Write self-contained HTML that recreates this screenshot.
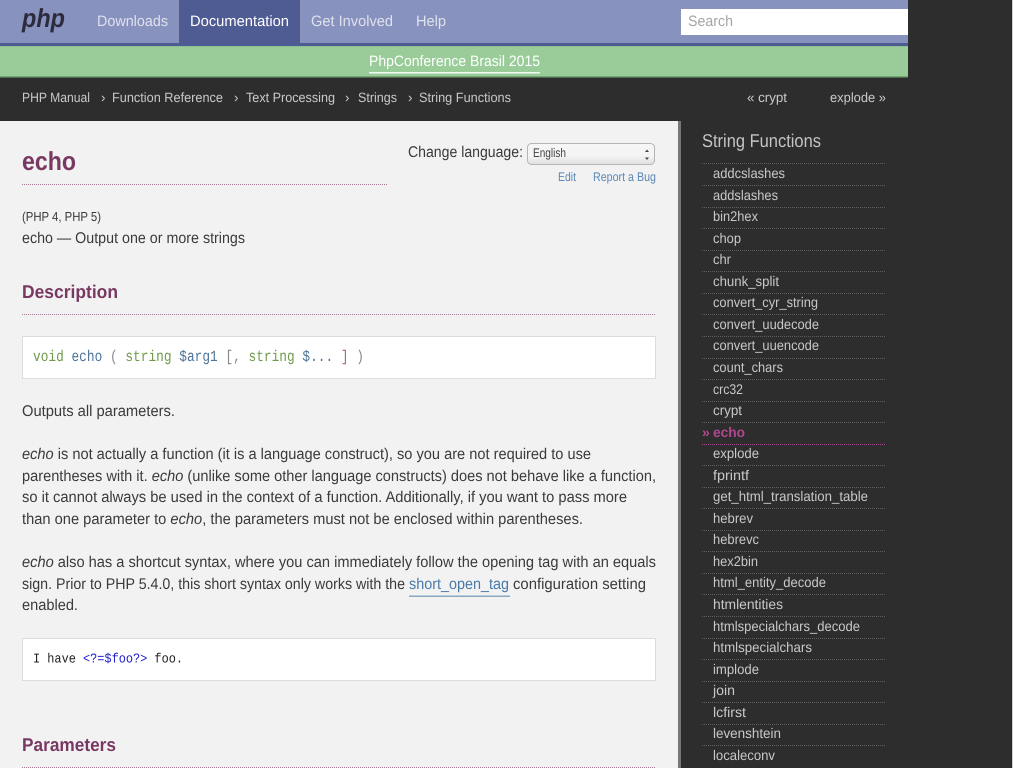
<!DOCTYPE html>
<html><head><meta charset="utf-8"><title>PHP: echo - Manual</title>
<style>
html,body{margin:0;padding:0;background:#fff}
body{width:1024px;height:768px;overflow:hidden;position:relative;font-family:"Liberation Sans",sans-serif}
svg{position:absolute;left:0;top:0}
text{font-family:"Liberation Sans",sans-serif;font-size:14px;white-space:pre;text-rendering:geometricPrecision}
.n{fill:#e2e4ef;font-size:15px}
.b{fill:#c9c9c9;font-size:13.5px}
.s{fill:#c8c8c8;font-size:14px}
.p{fill:#3a3a3a;font-size:15.500px}
.h{fill:#793862;font-weight:bold}
</style></head><body>
<svg width="1024" height="768" viewBox="0 0 1024 768">
<rect x="0" y="0" width="1013" height="768" fill="#2d2d2d"/>
<rect x="1012" y="0" width="1" height="768" fill="#cfcfcf"/>
<rect width="908" height="43" fill="#8892bf"/>
<rect y="43" width="908" height="3" fill="#4f5b93"/>
<rect x="179" width="121" height="43" fill="#4f5b93"/>
<rect y="47" width="908" height="29" fill="#99cc99"/>
<rect y="46" width="908" height="1" fill="#8fc08f"/>
<rect y="76" width="908" height="1.500" fill="#73a673"/>
<rect x="681" y="9" width="227" height="26" fill="#fff"/>
<text x="22" y="27" style="font-size:26px;font-weight:bold;font-style:italic;fill:#2b2b3d" textLength="43" lengthAdjust="spacingAndGlyphs">php</text>
<text class="n" x="97" y="26" textLength="71" lengthAdjust="spacingAndGlyphs" style="fill:#dfe1ec">Downloads</text>
<text class="n" x="190" y="26" textLength="99" lengthAdjust="spacingAndGlyphs" style="fill:#fff">Documentation</text>
<text class="n" x="311" y="26" textLength="82" lengthAdjust="spacingAndGlyphs" style="fill:#dfe1ec">Get Involved</text>
<text class="n" x="416" y="26" textLength="30" lengthAdjust="spacingAndGlyphs" style="fill:#dfe1ec">Help</text>
<text x="688" y="26" textLength="45" lengthAdjust="spacingAndGlyphs" style="font-size:15px;fill:#a5a5a5">Search</text>
<text x="369" y="66" textLength="171" lengthAdjust="spacingAndGlyphs" style="font-size:15px;fill:#fff">PhpConference Brasil 2015</text>
<rect x="369" y="72" width="171" height="1.500" fill="#f2f8f2"/>

<text class="b" x="22" y="102" textLength="68" lengthAdjust="spacingAndGlyphs">PHP Manual</text>
<text class="b" x="101" y="102">›</text>
<text class="b" x="112" y="102" textLength="111" lengthAdjust="spacingAndGlyphs">Function Reference</text>
<text class="b" x="234" y="102">›</text>
<text class="b" x="246" y="102" textLength="89" lengthAdjust="spacingAndGlyphs">Text Processing</text>
<text class="b" x="345" y="102">›</text>
<text class="b" x="358" y="102" textLength="39" lengthAdjust="spacingAndGlyphs">Strings</text>
<text class="b" x="408" y="102">›</text>
<text class="b" x="419" y="102" textLength="92" lengthAdjust="spacingAndGlyphs">String Functions</text>
<text class="b" x="747" y="102" textLength="40" lengthAdjust="spacingAndGlyphs">« crypt</text>
<text class="b" x="830" y="102" textLength="56" lengthAdjust="spacingAndGlyphs">explode »</text>

<rect x="0" y="121" width="678" height="647" fill="#f2f2f2"/>
<rect x="678" y="121" width="3" height="647" fill="#777"/>

<text x="22" y="170" textLength="54" lengthAdjust="spacingAndGlyphs" class="h" style="font-size:26px">echo</text>
<line x1="22" x2="387" y1="184.500" y2="184.500" stroke="#793862" stroke-dasharray="1 1" opacity=".65"/>
<text x="408" y="157" textLength="115" lengthAdjust="spacingAndGlyphs" style="font-size:15.500px;fill:#3a3a3a">Change language:</text>
<defs><linearGradient id="g" x1="0" y1="0" x2="0" y2="1"><stop offset="0" stop-color="#f6f6f6"/><stop offset=".6" stop-color="#f4f4f4"/><stop offset="1" stop-color="#dedede"/></linearGradient></defs>
<rect x="527.500" y="143.500" width="127" height="21" rx="4" fill="url(#g)" stroke="#b5b5b5"/>
<text x="533" y="157" textLength="33" lengthAdjust="spacingAndGlyphs" style="font-size:12.500px;fill:#444">English</text>
<path d="M645 152l2-2.500 2 2.500zM645 157.500l2 2.500 2-2.500z" fill="#444"/>
<text x="558" y="181" textLength="18" lengthAdjust="spacingAndGlyphs" style="font-size:12.500px;fill:#5b88b5">Edit</text>
<text x="593" y="181" textLength="63" lengthAdjust="spacingAndGlyphs" style="font-size:12.500px;fill:#5b88b5">Report a Bug</text>

<text x="22" y="221" textLength="79" lengthAdjust="spacingAndGlyphs" style="font-size:13px;fill:#3a3a3a">(PHP 4, PHP 5)</text>
<text class="p" x="22" y="243" textLength="223" lengthAdjust="spacingAndGlyphs">echo — Output one or more strings</text>

<text x="22" y="298" textLength="96" lengthAdjust="spacingAndGlyphs" class="h" style="font-size:18.500px">Description</text>
<line x1="22" x2="656" y1="314.500" y2="314.500" stroke="#793862" stroke-dasharray="1 1" opacity=".65"/>

<rect x="22.500" y="336.500" width="633" height="42" fill="#fff" stroke="#dcdcdc"/>
<text x="33" y="361" textLength="331" lengthAdjust="spacingAndGlyphs" style="font-family:'Liberation Mono',monospace;font-size:15.500px;fill:#888"><tspan fill="#6f9a4b">void</tspan> <tspan fill="#4d7499">echo</tspan> ( <tspan fill="#6f9a4b">string</tspan> <tspan fill="#4d7499">$arg1</tspan> [, <tspan fill="#6f9a4b">string</tspan> <tspan fill="#4d7499">$...</tspan> <tspan fill="#a86a6a">]</tspan> )</text>

<text class="p" x="22" y="416" textLength="153" lengthAdjust="spacingAndGlyphs">Outputs all parameters.</text>
<text class="p" x="22" y="459" textLength="569" lengthAdjust="spacingAndGlyphs"><tspan font-style="italic">echo</tspan> is not actually a function (it is a language construct), so you are not required to use</text>
<text class="p" x="22" y="481" textLength="634" lengthAdjust="spacingAndGlyphs">parentheses with it. <tspan font-style="italic">echo</tspan> (unlike some other language constructs) does not behave like a function,</text>
<text class="p" x="22" y="502" textLength="605" lengthAdjust="spacingAndGlyphs">so it cannot always be used in the context of a function. Additionally, if you want to pass more</text>
<text class="p" x="22" y="524" textLength="561" lengthAdjust="spacingAndGlyphs">than one parameter to <tspan font-style="italic">echo</tspan>, the parameters must not be enclosed within parentheses.</text>
<text class="p" x="22" y="567" textLength="634" lengthAdjust="spacingAndGlyphs"><tspan font-style="italic">echo</tspan> also has a shortcut syntax, where you can immediately follow the opening tag with an equals</text>
<text class="p" x="22" y="589" textLength="383" lengthAdjust="spacingAndGlyphs">sign. Prior to PHP 5.4.0, this short syntax only works with the</text>
<text class="p" x="409" y="589" textLength="100" lengthAdjust="spacingAndGlyphs" style="fill:#4a7aa8">short_open_tag</text>
<text class="p" x="513" y="589" textLength="133" lengthAdjust="spacingAndGlyphs">configuration setting</text>
<rect x="409" y="595.500" width="101" height="1.500" fill="#8aa8c4"/>
<text class="p" x="22" y="610" textLength="56" lengthAdjust="spacingAndGlyphs">enabled.</text>

<rect x="22.500" y="638.500" width="633" height="42" fill="#fff" stroke="#dcdcdc"/>
<text x="33" y="662.500" textLength="150" lengthAdjust="spacingAndGlyphs" style="font-family:'Liberation Mono',monospace;font-size:13.500px;fill:#222">I have <tspan fill="#2222cc">&lt;?=$foo?&gt;</tspan> foo.</text>

<text x="22" y="751" textLength="94" lengthAdjust="spacingAndGlyphs" class="h" style="font-size:18.500px">Parameters</text>
<line x1="22" x2="656" y1="767.500" y2="767.500" stroke="#793862" stroke-dasharray="1 1" opacity=".65"/>

<text x="702" y="147" textLength="119" lengthAdjust="spacingAndGlyphs" style="font-size:18.500px;fill:#c4c4c4">String Functions</text>
<g stroke="#5f5f5f" stroke-dasharray="1 1">
<path d="M702 163.500H886M702 185.500H886M702 207.500H886M702 228.500H886M702 250.500H886M702 271.500H886M702 293.500H886M702 314.500H886M702 336.500H886M702 358.500H886M702 379.500H886M702 401.500H886M702 422.500H886M702 465.500H886M702 487.500H886M702 508.500H886M702 530.500H886M702 551.500H886M702 573.500H886M702 594.500H886M702 616.500H886M702 638.500H886M702 659.500H886M702 681.500H886M702 702.500H886M702 724.500H886M702 745.500H886" fill="none"/>
</g>
<line x1="702" x2="886" y1="444.500" y2="444.500" stroke="#a8478f" stroke-dasharray="1 1"/>
<text class="s" x="713" y="178" textLength="72" lengthAdjust="spacingAndGlyphs">addcslashes</text>
<text class="s" x="713" y="200" textLength="65" lengthAdjust="spacingAndGlyphs">addslashes</text>
<text class="s" x="713" y="221" textLength="45" lengthAdjust="spacingAndGlyphs">bin2hex</text>
<text class="s" x="713" y="243" textLength="28" lengthAdjust="spacingAndGlyphs">chop</text>
<text class="s" x="713" y="264" textLength="18" lengthAdjust="spacingAndGlyphs">chr</text>
<text class="s" x="713" y="286" textLength="66" lengthAdjust="spacingAndGlyphs">chunk_split</text>
<text class="s" x="713" y="307" textLength="105" lengthAdjust="spacingAndGlyphs">convert_cyr_string</text>
<text class="s" x="713" y="329" textLength="106" lengthAdjust="spacingAndGlyphs">convert_uudecode</text>
<text class="s" x="713" y="350" textLength="106" lengthAdjust="spacingAndGlyphs">convert_uuencode</text>
<text class="s" x="713" y="372" textLength="70" lengthAdjust="spacingAndGlyphs">count_chars</text>
<text class="s" x="713" y="394" textLength="30" lengthAdjust="spacingAndGlyphs">crc32</text>
<text class="s" x="713" y="415" textLength="29" lengthAdjust="spacingAndGlyphs">crypt</text>
<text x="702" y="437" style="font-size:14px;font-weight:bold;fill:#b0488f">»</text>
<text x="713" y="437" textLength="32" lengthAdjust="spacingAndGlyphs" style="font-size:14px;font-weight:bold;fill:#b0488f">echo</text>
<text class="s" x="713" y="458" textLength="46" lengthAdjust="spacingAndGlyphs">explode</text>
<text class="s" x="713" y="480" textLength="36" lengthAdjust="spacingAndGlyphs">fprintf</text>
<text class="s" x="713" y="501" textLength="155" lengthAdjust="spacingAndGlyphs">get_html_translation_table</text>
<text class="s" x="713" y="523" textLength="40" lengthAdjust="spacingAndGlyphs">hebrev</text>
<text class="s" x="713" y="544" textLength="46" lengthAdjust="spacingAndGlyphs">hebrevc</text>
<text class="s" x="713" y="566" textLength="45" lengthAdjust="spacingAndGlyphs">hex2bin</text>
<text class="s" x="713" y="587" textLength="113" lengthAdjust="spacingAndGlyphs">html_entity_decode</text>
<text class="s" x="713" y="609" textLength="70" lengthAdjust="spacingAndGlyphs">htmlentities</text>
<text class="s" x="713" y="631" textLength="147" lengthAdjust="spacingAndGlyphs">htmlspecialchars_decode</text>
<text class="s" x="713" y="652" textLength="99" lengthAdjust="spacingAndGlyphs">htmlspecialchars</text>
<text class="s" x="713" y="674" textLength="46" lengthAdjust="spacingAndGlyphs">implode</text>
<text class="s" x="713" y="695" textLength="22" lengthAdjust="spacingAndGlyphs">join</text>
<text class="s" x="713" y="717" textLength="33" lengthAdjust="spacingAndGlyphs">lcfirst</text>
<text class="s" x="713" y="738" textLength="68" lengthAdjust="spacingAndGlyphs">levenshtein</text>
<text class="s" x="713" y="760" textLength="62" lengthAdjust="spacingAndGlyphs">localeconv</text>
</svg>
</body></html>
